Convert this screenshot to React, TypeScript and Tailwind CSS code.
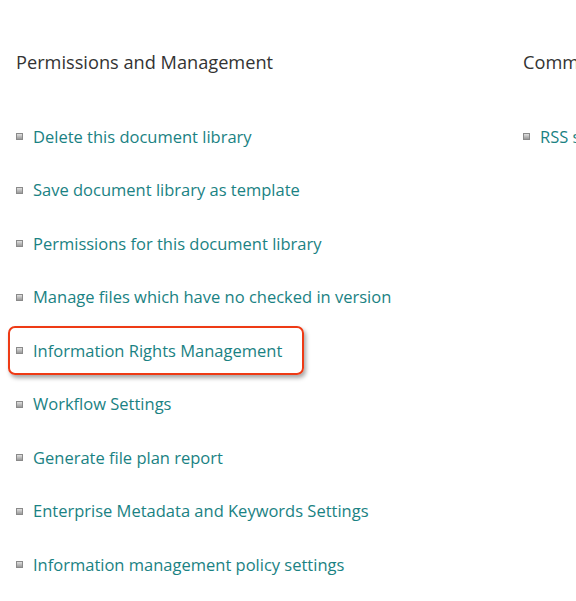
import React from "react";

const items = [
  "Delete this document library",
  "Save document library as template",
  "Permissions for this document library",
  "Manage files which have no checked in version",
  "Information Rights Management",
  "Workflow Settings",
  "Generate file plan report",
  "Enterprise Metadata and Keywords Settings",
  "Information management policy settings",
];

function Bullet() {
  return (
    <span className="inline-block w-[7px] h-[7px] border border-[#8a8a8a] bg-gradient-to-b from-[#e0e0e0] to-[#9a9a9a] shrink-0" />
  );
}

export default function App() {
  return (
    <div
      className="w-[576px] h-[601px] bg-white overflow-hidden flex"
      style={{ fontFamily: '"Open Sans", "Noto Sans", sans-serif' }}
    >
      <div className="w-[507px] shrink-0 pl-[16px] pt-[49px]">
        <div className="text-[18.2px] text-[#333] leading-[26px]">Permissions and Management</div>
        <ul className="mt-[35px] flex flex-col">
          {items.map((t, i) => {
            const hl = i === 4;
            return (
              <li key={t} className="h-[53.5px] flex items-center">
                <div
                  className={
                    hl
                      ? "flex items-center gap-[10px] -ml-[8px] pl-[6px] pr-[20px] h-[49px] border-2 border-[#ee3a15] rounded-[7px] shadow-[2px_3px_4px_rgba(0,0,0,0.35)]"
                      : "flex items-center gap-[10px]"
                  }
                >
                  <Bullet />
                  <span className="text-[16.5px] text-[#1a8283] leading-[22px] whitespace-nowrap">{t}</span>
                </div>
              </li>
            );
          })}
        </ul>
      </div>
      <div className="pt-[49px] pl-[16px]">
        <div className="text-[18.2px] text-[#333] leading-[26px] whitespace-nowrap">Community Settings</div>
        <ul className="mt-[35px] flex flex-col">
          <li className="h-[53.5px] flex items-center gap-[10px]">
            <Bullet />
            <span className="text-[16.5px] text-[#1a8283] leading-[22px] whitespace-nowrap">RSS settings</span>
          </li>
        </ul>
      </div>
    </div>
  );
}
